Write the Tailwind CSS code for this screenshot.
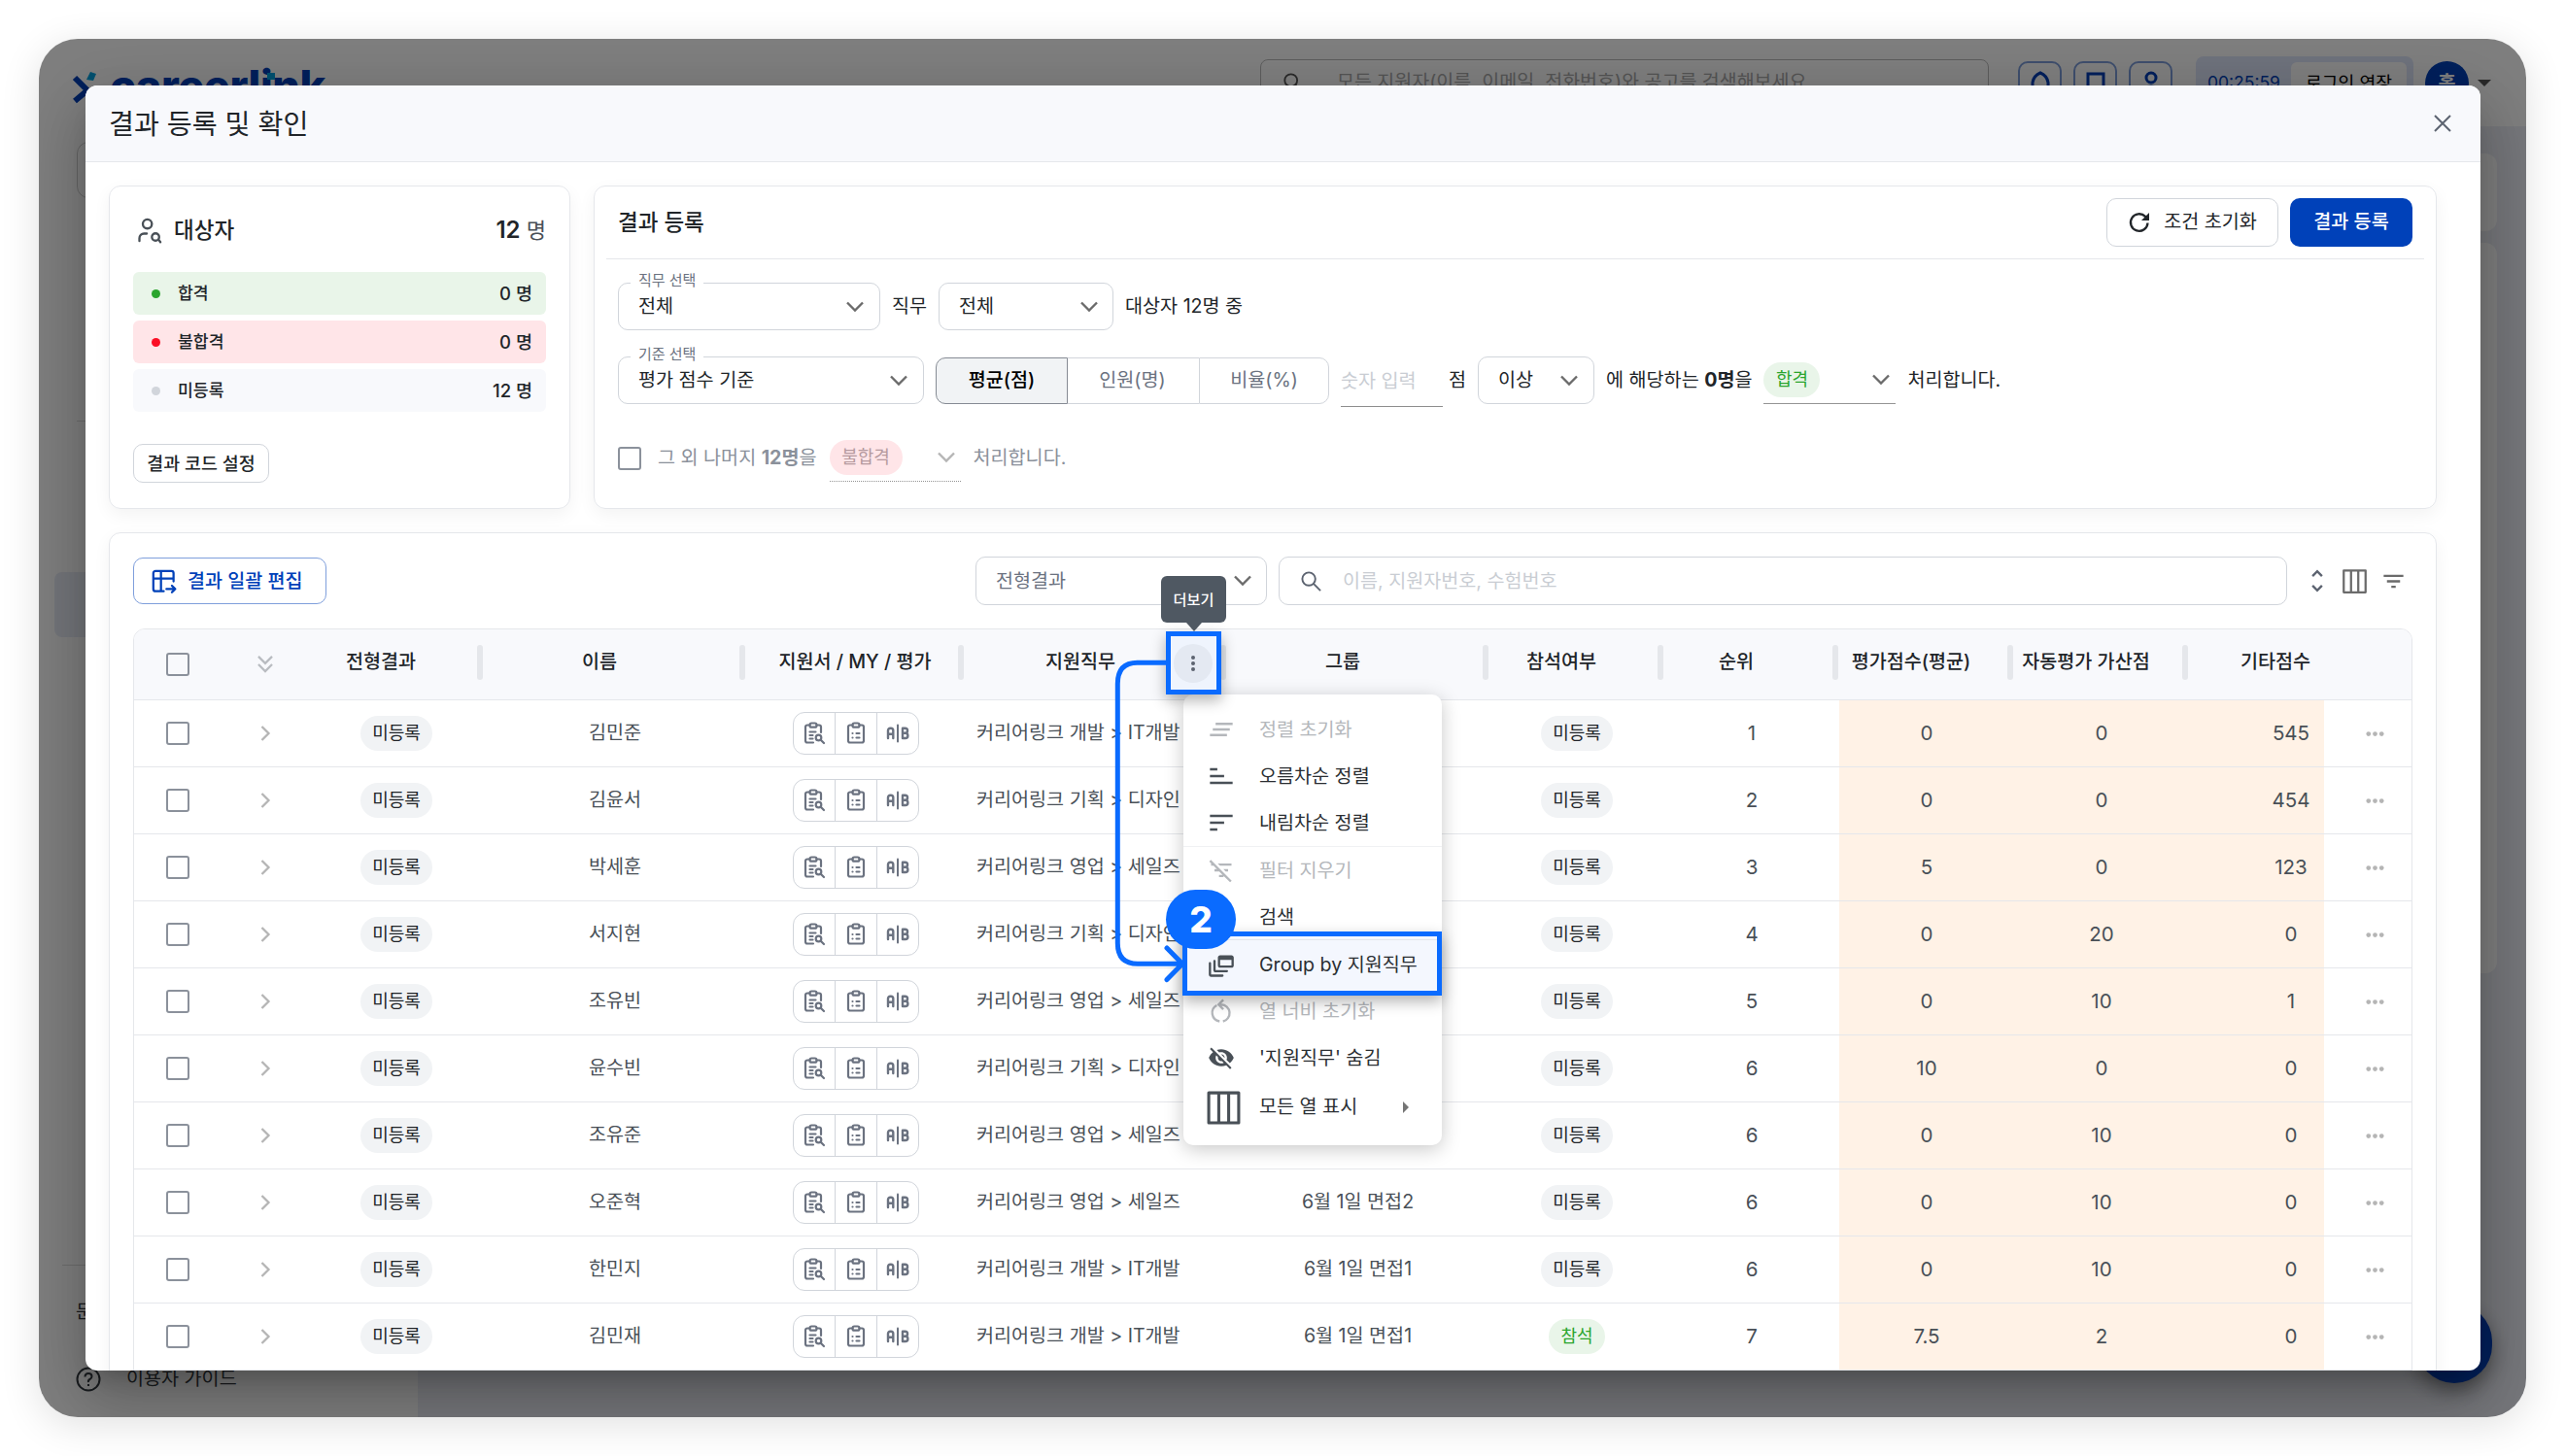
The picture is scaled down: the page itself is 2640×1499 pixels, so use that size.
<!DOCTYPE html>
<html lang="ko">
<head>
    <meta charset="UTF-8">
    <meta name="viewport" content="width=device-width, initial-scale=1.0">
    <script src="https://cdn.jsdelivr.net/npm/@tailwindcss/browser@4"></script>
    <title>결과 등록 및 확인</title>
</head>
<body class="w-[2640px] h-[1499px] overflow-hidden bg-white font-[Inter,'Noto_Sans_CJK_KR',sans-serif] text-[19.6px] leading-none text-[#212529] whitespace-nowrap">

    <!-- icon set -->
    <svg class="hidden">
        <symbol id="chevron-down" viewBox="0 0 20 20"><path d="M2 5.5l8 8 8-8" fill="none" stroke="currentColor" stroke-width="2.4"/></symbol>
        <symbol id="chevron-right" viewBox="0 0 24 24"><path d="M8.5 5l7 7-7 7" fill="none" stroke="currentColor" stroke-width="2.3"/></symbol>
        <symbol id="chevrons-down" viewBox="0 0 24 24"><path d="M5.5 4.5l6.5 6.5 6.5-6.5M5.5 12l6.5 6.5 6.5-6.5" fill="none" stroke="currentColor" stroke-width="2.1"/></symbol>
        <symbol id="search" viewBox="0 0 24 24"><circle cx="9.5" cy="9.5" r="7" fill="none" stroke="currentColor" stroke-width="2"/><path d="M14.5 14.5l7.5 7.5" stroke="currentColor" stroke-width="2"/></symbol>
        <symbol id="user-search" viewBox="0 0 24 24" fill="none" stroke="currentColor" stroke-width="2" stroke-linecap="round" stroke-linejoin="round"><path d="M6 6.500a4 4 0 1 0 8 0a4 4 0 0 0-8 0M3 21.500v-2.500a4 4 0 0 1 4-4h2.500M14 18a3.200 3.200 0 1 0 6.400 0a3.200 3.200 0 1 0-6.400 0M20 20.500L21.500 22.500"/></symbol>
        <symbol id="clipboard-search" viewBox="0 0 24 24" fill="none" stroke="currentColor" stroke-width="2.200" stroke-linecap="round" stroke-linejoin="round"><path d="M11 21.500H5a2 2 0 0 1-2-2V5.500a2 2 0 0 1 2-2h2.500M14.500 3.500H17a2 2 0 0 1 2 2v5.500"/><rect x="7.500" y="1.500" width="7" height="4.200" rx="1.800"/><path d="M7.500 10.500h6M7.500 14h3M7.500 17.500h3"/><circle cx="16.500" cy="16.500" r="2.800"/><path d="M18.700 18.700L22 22"/></symbol>
        <symbol id="clipboard-list" viewBox="0 0 24 24" fill="none" stroke="currentColor" stroke-width="2.200" stroke-linecap="round" stroke-linejoin="round"><path d="M8.500 3.500H6a2 2 0 0 0-2 2v14a2 2 0 0 0 2 2h12a2 2 0 0 0 2-2v-14a2 2 0 0 0-2-2h-2.500"/><rect x="8.500" y="1.500" width="7" height="4.200" rx="1.800"/><path d="M8.500 12h.01M8.500 16.500h.01M12.500 12h3M12.500 16.500h3"/></symbol>
        <symbol id="a-b" viewBox="0 0 24 24" fill="none" stroke="currentColor" stroke-width="2.400" stroke-linecap="round" stroke-linejoin="round"><path d="M2 17v-8a2.300 2.300 0 0 1 2.300-2.300h.7a2.300 2.300 0 0 1 2.300 2.300v8M2 12.800h5.300M17 6.700v10.300h2.800a2.600 2.600 0 0 0 0-5.200h-2.800h2.500a2.500 2.500 0 0 0 0-5.100h-2.500"/><path d="M12 3.500v17" stroke-width="2"/></symbol>
        <symbol id="table-export" viewBox="0 0 24 24" fill="none" stroke="currentColor" stroke-width="2" stroke-linecap="round" stroke-linejoin="round"><path d="M12 21H4.500a2 2 0 0 1-2-2V4.500a2 2 0 0 1 2-2H19a2 2 0 0 1 2 2V12M2.500 9.500H21M9.500 2.500V21M14.500 19h8M19.500 16l3 3-3 3"/></symbol>
        <symbol id="refresh" viewBox="0 0 24 24"><path d="M20.500 12.500a8.800 8.800 0 1 1-2.500-6.600l3 3" fill="none" stroke="currentColor" stroke-width="2.300"/><path d="M22 2v8h-8z" fill="currentColor"/></symbol>
        <symbol id="columns" viewBox="0 0 24 24"><path d="M2 2h20v20H2zM8.700 2v20M15.300 2v20" fill="none" stroke="currentColor" stroke-width="2" stroke-linejoin="round"/></symbol>
        <symbol id="filter" viewBox="0 0 24 24"><path d="M3 7h18M6 12h12M10 17h4" fill="none" stroke="currentColor" stroke-width="2.200"/></symbol>
        <symbol id="unfold" viewBox="0 0 24 24"><path d="M7.500 7.500L12 3l4.500 4.500M7.500 16.500L12 21l4.500-4.500" fill="none" stroke="currentColor" stroke-width="2.200"/></symbol>
        <symbol id="more-h" viewBox="0 0 24 24" fill="currentColor"><circle cx="3.500" cy="12" r="3"/><circle cx="12" cy="12" r="3"/><circle cx="20.500" cy="12" r="3"/></symbol>
        <symbol id="clear-sort" viewBox="0 0 24 24"><path d="M7 7h15M4.500 12h15M2 17h15" stroke="currentColor" stroke-width="2.100"/></symbol>
        <symbol id="sort-asc" viewBox="0 0 24 24"><path d="M2 6h6.500M2 12h12.500M2 18h20" stroke="currentColor" stroke-width="2.100"/></symbol>
        <symbol id="sort-desc" viewBox="0 0 24 24"><path d="M2 6h20M2 12h12.500M2 18h6.500" stroke="currentColor" stroke-width="2.100"/></symbol>
        <symbol id="filter-off" viewBox="0 0 24 24" fill="currentColor"><path d="M10.830 8H21V6H8.830l2 2zm5 5H18v-2h-4.170l2 2zM14 16.830V18h-4v-2h3.170l-3-3H6v-2h2.170l-3-3H3V6h.17L1.390 4.220 2.800 2.810l18.380 18.380-1.410 1.410L14 16.830z"/></symbol>
        <symbol id="group" viewBox="0 0 24 24" fill="currentColor"><path d="M3 22h10c.55 0 1-.45 1-1s-.45-1-1-1H3V10c0-.55-.45-1-1-1s-1 .45-1 1v10c0 1.100.9 2 2 2zM7 18h10c.55 0 1-.45 1-1s-.45-1-1-1H7V8c0-.55-.45-1-1-1s-1 .45-1 1v8c0 1.100.9 2 2 2zM21 3h-10c-1.100 0-2 .9-2 2v7c0 1.100.9 2 2 2h10c1.100 0 2-.9 2-2V5c0-1.100-.9-2-2-2zm0 9H11V7h10v5z"/></symbol>
        <symbol id="restart" viewBox="0 0 24 24" fill="none" stroke="currentColor" stroke-width="2"><path d="M8 6.800A7.600 7.600 0 0 0 10.500 21M13.500 21A7.500 7.500 0 0 0 12 6.200H10M13.800 2l-4.200 4.200 4.200 4.200"/></symbol>
        <symbol id="eye-off" viewBox="0 0 24 24" fill="currentColor"><path d="M12 7c2.760 0 5 2.240 5 5 0 .65-.13 1.260-.36 1.830l2.920 2.920c1.510-1.260 2.700-2.890 3.430-4.750-1.730-4.390-6-7.500-11-7.500-1.400 0-2.740.25-3.980.7l2.160 2.160C10.740 7.130 11.350 7 12 7zM2 4.270l2.280 2.280.46.46C3.080 8.300 1.780 10.020 1 12c1.730 4.390 6 7.500 11 7.500 1.550 0 3.030-.3 4.380-.84l.42.42L19.730 22 21 20.730 3.270 3 2 4.270zM7.530 9.800l1.550 1.550c-.05.21-.08.43-.08.65 0 1.660 1.340 3 3 3 .22 0 .44-.03.65-.08l1.550 1.550c-.67.33-1.410.53-2.200.53-2.760 0-5-2.240-5-5 0-.79.2-1.530.53-2.200zm4.310-.78l3.150 3.150.02-.16c0-1.660-1.340-3-3-3l-.17.01z"/></symbol>
    </svg>

    <div class="relative ml-10 mt-10 w-[2560px] h-[1419px] rounded-[40px] overflow-hidden bg-white">
        <!-- page behind the dialog -->
        <div class="flex flex-col h-full">
            <header class="h-[90px] flex justify-between items-start pl-[34px] pr-[36px] shrink-0">
                <div class="flex items-start pt-[26px]">
                    <svg class="w-[26px] h-[46px] mt-[-1px] mr-[13px]" viewBox="0 0 26 46"><path d="M3 15l13 13-13 11" fill="none" stroke="#0041b9" stroke-width="6"/><path d="M19 9l6 2-3 7-7-1z" fill="#00a3e0"/></svg>
                    <span class="relative text-[45px] font-extrabold text-[#0041b9] tracking-[-0.4px]">careerlink<span class="absolute left-[162px] top-[9px] w-[8px] h-[7px] bg-[#00a3e0]"></span></span>
                </div>
                <div class="flex items-start pt-[18px]">
                    <div class="mt-[3px] w-[750px] h-[48px] border border-[#bbb] rounded-lg flex items-center px-[22px] gap-[34px] text-[#aaa] text-[19.5px] mr-[30px]">
                        <svg class="w-[22px] h-[22px] text-[#555]"><use href="#search"/></svg>
                        <span>모든 지원자(이름, 이메일, 전화번호)와 공고를 검색해보세요</span>
                    </div>
                    <div class="mt-[5px] flex gap-[12px] mr-[24px] text-[#0041b9]">
                        <span class="w-[45px] h-[45px] border-2 border-[#7f9fdc] rounded-[10px] flex justify-center pt-[8px]"><svg class="w-[24px] h-[26px]" viewBox="0 0 24 26"><path d="M4 22V12Q5 5 12 2Q19 5 20 12V22z" fill="none" stroke="currentColor" stroke-width="3"/></svg></span>
                        <span class="w-[45px] h-[45px] border-2 border-[#7f9fdc] rounded-[10px] flex justify-center pt-[8px]"><svg class="w-[24px] h-[26px]" viewBox="0 0 24 26"><path d="M4 24V3H20V24" fill="none" stroke="currentColor" stroke-width="3"/></svg></span>
                        <span class="w-[45px] h-[45px] border-2 border-[#7f9fdc] rounded-[10px] flex justify-center pt-[8px]"><svg class="w-[24px] h-[26px]" viewBox="0 0 24 26"><circle cx="12" cy="7" r="5" fill="none" stroke="currentColor" stroke-width="3"/><path d="M4 24q0-8 8-8t8 8" fill="none" stroke="currentColor" stroke-width="3"/></svg></span>
                    </div>
                    <div class="w-[224px] h-[54px] rounded-lg bg-[#dfe6fb] flex items-center justify-between pl-[12px] pr-[7px] mr-[12px]">
                        <span class="text-[#0041b9] text-[17.500px]">00:25:59</span>
                        <span class="w-[119px] h-[42px] rounded-md bg-white flex items-center justify-center text-[18.200px] text-black">로그인 연장</span>
                    </div>
                    <span class="mt-[5px] w-[45px] h-[45px] rounded-full bg-[#0041b9] text-white font-bold flex items-center justify-center">홍</span>
                    <span class="mt-[24px] ml-[9px] border-x-[7px] border-x-transparent border-t-[7px] border-t-[#555]"></span>
                </div>
            </header>
            <div class="flex flex-1">
                <aside class="w-[390px] flex flex-col text-[#343a40]">
                    <div class="ml-[39px] mt-[16px] h-[58px] w-[312px] border border-[#ccc] rounded-xl"></div>
                    <div class="ml-[39px] mt-[229px] w-[312px] border-t border-[#ddd]"></div>
                    <div class="ml-[16px] mt-[155px] h-[67px] w-[358px] rounded-lg bg-[#e8ecf6]"></div>
                    <div class="ml-[24px] mt-[646px] w-[342px] border-t border-[#ddd]"></div>
                    <div class="ml-[38px] mt-[38px]">문의하기</div>
                    <div class="ml-[38px] mt-[46px] flex items-center gap-[26px]">
                        <svg class="w-[26px] h-[26px]" viewBox="0 0 26 26"><circle cx="13" cy="13" r="11.500" fill="none" stroke="currentColor" stroke-width="2"/><path d="M9.500 10.500q0-3.500 3.500-3.500t3.500 3q0 2-2 3t-1.500 3M13 18v2" fill="none" stroke="currentColor" stroke-width="2"/></svg>
                        <span class="text-[19.600px]">이용자 가이드</span>
                    </div>
                </aside>
                <main class="flex-1 bg-[#edeff7] flex flex-col gap-[12px] pt-[28px] px-[30px]">
                    <div class="h-[80px] rounded-xl bg-white"></div>
                    <div class="h-[752px] rounded-xl bg-white"></div>
                </main>
            </div>
        </div>
        <span class="absolute left-[2447px] top-[1302px] w-[78px] h-[82px] rounded-full bg-[#0041b9] shadow-[0_8px_20px_rgba(0,0,0,.4)]"></span>
        <div class="absolute inset-0 bg-black/50"></div>

        <!-- dialog -->
        <div class="absolute left-[48px] top-[48px] w-[2465px] h-[1323px] rounded-[12px] bg-white shadow-[0_16px_22px_-10px_rgba(0,0,0,.2),0_36px_57px_4px_rgba(0,0,0,.14),0_14px_69px_12px_rgba(0,0,0,.12)]">
            <div class="flex flex-col h-full overflow-hidden rounded-[12px]">
                <div class="h-[79px] shrink-0 bg-[#f8f9fc] border-b border-[#e5e7eb] flex items-center justify-between pl-[24px] pr-[30px]">
                    <h1 class="text-[28.200px] pt-[3px]">결과 등록 및 확인</h1>
                    <svg class="w-[18px] h-[18px] text-[#5c6370]" viewBox="0 0 18 18"><path d="M1 1l16 16M17 1L1 17" stroke="currentColor" stroke-width="2"/></svg>
                </div>

                <div class="flex flex-col gap-[24px] pt-[24px] pl-[24px] pr-[45px]">
                    <div class="flex gap-[24px]">
                        <!-- candidates summary -->
                        <section class="w-[475px] h-[333px] border-[1.500px] border-[#e5e7eb] rounded-[12px] shadow-[0_6px_18px_rgba(0,0,0,.05)] px-[24px] flex flex-col">
                            <div class="h-[88px] flex items-center pl-[3px] pt-[2px]">
                                <svg class="w-[28px] h-[28px] text-[#495057]"><use href="#user-search"/></svg>
                                <h2 class="ml-[11px] text-[22.500px] font-medium">대상자</h2>
                                <span class="ml-auto text-[22px] text-[#495057]"><b class="font-semibold text-[#212529] text-[24px]">12</b> 명</span>
                            </div>
                            <ul class="flex flex-col gap-[6px] text-[18.500px] font-medium">
                                <li class="h-[44px] rounded-[6px] bg-[#e9f5e9] flex items-center px-[14px]"><i class="w-[9px] h-[9px] ml-[5px] rounded-full bg-[#2ba52e] mr-[18px]"></i><span class="text-[17.200px]">합격</span><span class="ml-auto">0 명</span></li>
                                <li class="h-[44px] rounded-[6px] bg-[#ffe5e8] flex items-center px-[14px]"><i class="w-[9px] h-[9px] ml-[5px] rounded-full bg-[#fb0f25] mr-[18px]"></i><span class="text-[17.200px]">불합격</span><span class="ml-auto">0 명</span></li>
                                <li class="h-[44px] rounded-[6px] bg-[#f8f9fc] flex items-center px-[14px]"><i class="w-[9px] h-[9px] ml-[5px] rounded-full bg-[#d1d5db] mr-[18px]"></i><span class="text-[17.200px]">미등록</span><span class="ml-auto">12 명</span></li>
                            </ul>
                            <button class="mt-[33px] w-[140px] h-[40px] border-[1.500px] border-[#d1d5db] rounded-[10px] text-[18.400px] font-medium">결과 코드 설정</button>
                        </section>

                        <!-- result registration -->
                        <section class="flex-1 h-[333px] border-[1.500px] border-[#e5e7eb] rounded-[12px] shadow-[0_6px_18px_rgba(0,0,0,.05)] px-[12px]">
                            <div class="h-[75px] border-b border-[#e5e7eb] flex items-center px-[12px]">
                                <h2 class="text-[22.500px] font-medium">결과 등록</h2>
                                <button class="ml-auto w-[177px] h-[50px] border-[1.500px] border-[#d1d5db] rounded-[10px] flex items-center justify-center gap-[13px]"><svg class="w-[24px] h-[24px]"><use href="#refresh"/></svg>조건 초기화</button>
                                <button class="ml-[12px] w-[126px] h-[50px] rounded-[10px] bg-[#0041b9] text-white font-medium">결과 등록</button>
                            </div>
                            <div class="flex items-center pl-[12px] mt-[24px]">
                                <div class="relative w-[270px] h-[49px] border-[1.500px] border-[#d1d5db] rounded-[10px] flex items-center justify-between pl-[20px] pr-[15px]">
                                    <span class="absolute left-[12px] top-[-11px] px-[8px] bg-white text-[15px] text-[#6b7280] leading-[16px]">직무 선택</span>전체<svg class="w-[20px] h-[20px] text-[#6b6b6b]"><use href="#chevron-down"/></svg>
                                </div>
                                <span class="mx-[12px]">직무</span>
                                <div class="w-[180px] h-[49px] border-[1.500px] border-[#d1d5db] rounded-[10px] flex items-center justify-between pl-[20px] pr-[14px]">전체<svg class="w-[20px] h-[20px] text-[#6b6b6b]"><use href="#chevron-down"/></svg></div>
                                <span class="ml-[12px]">대상자 12명 중</span>
                            </div>
                            <div class="flex items-center pl-[12px] mt-[27px] h-[49px]">
                                <div class="relative w-[315px] h-[49px] border-[1.500px] border-[#d1d5db] rounded-[10px] flex items-center justify-between pl-[20px] pr-[15px]">
                                    <span class="absolute left-[12px] top-[-11px] px-[8px] bg-white text-[15px] text-[#6b7280] leading-[16px]">기준 선택</span>평가 점수 기준<svg class="w-[20px] h-[20px] text-[#6b6b6b]"><use href="#chevron-down"/></svg>
                                </div>
                                <div class="ml-[12px] flex h-[48px] text-[#6b7280]">
                                    <span class="w-[136px] border border-[#868b94] bg-[#f1f3f5] rounded-l-[10px] flex items-center justify-center text-black font-medium">평균(점)</span>
                                    <span class="w-[135px] border-y-[1.500px] border-[#d1d5db] flex items-center justify-center pr-[2px]">인원(명)</span>
                                    <span class="w-[134px] border-[1.500px] border-[#d1d5db] rounded-r-[10px] flex items-center justify-center">비율(%)</span>
                                </div>
                                <span class="ml-[12px] mt-[4px] w-[105px] h-[50px] border-b border-[#8e8e8e] text-[#c9cdd3] leading-[46px]">숫자 입력</span>
                                <span class="ml-[6px]">점</span>
                                <div class="ml-[12px] w-[120px] h-[49px] border-[1.500px] border-[#d1d5db] rounded-[10px] flex items-center justify-between pl-[20px] pr-[15px]">이상<svg class="w-[20px] h-[20px] text-[#6b6b6b]"><use href="#chevron-down"/></svg></div>
                                <span class="ml-[12px]">에 해당하는 <b class="font-bold">0명</b>을</span>
                                <div class="ml-[12px] w-[136px] h-[49px] border-b border-[#949494] flex items-center justify-between pr-[5px]">
                                    <span class="w-[58px] h-[36px] rounded-full bg-[#e9f5e9] text-[#2ba52e] text-[18px] flex items-center justify-center">합격</span><svg class="w-[20px] h-[20px] text-[#6b6b6b]"><use href="#chevron-down"/></svg>
                                </div>
                                <span class="ml-[12px]">처리합니다.</span>
                            </div>
                            <div class="flex items-center pl-[12px] mt-[31px] h-[49px] text-[#8b919b]">
                                <i class="w-[24px] h-[24px] border-[2.500px] border-[#8b919b] rounded-[3px]"></i>
                                <span class="ml-[17px]">그 외 나머지 <b class="font-bold">12명</b>을</span>
                                <div class="ml-[13px] w-[135px] h-[49px] border-b border-dotted border-[#949494] flex items-center justify-between pr-[5px]">
                                    <span class="w-[75px] h-[36px] rounded-full bg-[#ffe5e8] text-[#b59a9f] text-[18px] flex items-center justify-center">불합격</span><svg class="w-[20px] h-[20px] text-[#b5b5b5]"><use href="#chevron-down"/></svg>
                                </div>
                                <span class="ml-[13px]">처리합니다.</span>
                            </div>
                        </section>
                    </div>

                    <!-- result table -->
                    <section class="h-[880px] border-[1.500px] border-[#e5e7eb] rounded-[12px] shadow-[0_6px_18px_rgba(0,0,0,.05)] pl-[24px] pr-[24px] pt-[24px]">
                        <div class="flex items-center h-[50px]">
                            <button class="w-[199px] h-[48px] border-[1.500px] border-[#7f9fdc] rounded-[10px] text-[#0041b9] font-medium flex items-center pl-[17px] gap-[11px]"><svg class="w-[27px] h-[27px]"><use href="#table-export"/></svg><span class="pt-px">결과 일괄 편집</span></button>
                            <div class="ml-[668px] w-[300px] h-[50px] border-[1.500px] border-[#d1d5db] rounded-[10px] flex items-center justify-between pl-[20px] pr-[14px] text-[#6b7280]"><span class="pt-px">전형결과</span><svg class="w-[20px] h-[20px] text-[#6b6b6b]"><use href="#chevron-down"/></svg></div>
                            <div class="ml-[12px] w-[1038px] h-[50px] border-[1.500px] border-[#d1d5db] rounded-[10px] flex items-center pl-[21px] gap-[21px] text-[#c9cdd3]"><svg class="w-[23px] h-[23px] text-[#5c6370]"><use href="#search"/></svg><span class="pt-px">이름, 지원자번호, 수험번호</span></div>
                            <svg class="ml-[18px] w-[26px] h-[26px] text-[#5c6370]"><use href="#unfold"/></svg>
                            <svg class="ml-[12px] w-[27px] h-[27px] text-[#6b6b6b]"><use href="#columns"/></svg>
                            <svg class="ml-[13px] w-[27px] h-[27px] text-[#6b6b6b]"><use href="#filter"/></svg>
                        </div>
                        <div class="mt-[24px] w-[2346px] border-[1.500px] border-[#e5e7eb] rounded-t-[12px] overflow-hidden">
                            <div class="h-[73px] bg-[#f8f9fc] border-b border-[#e5e7eb] grid grid-cols-[90px_90px_180px_270px_225px_270px_270px_180px_180px_180px_180px_139px_90px] font-medium">
                                <span class="flex items-center justify-center"><i class="w-[24px] h-[24px] border-[2.500px] border-[#8b919b] rounded-[3px] mr-px"></i></span>
                                <span class="flex items-center justify-center text-[#b9bcc1]"><svg class="w-[26px] h-[26px]"><use href="#chevrons-down"/></svg></span>
                                <span class="flex items-center pb-[4px]"><span class="flex-1 text-center">전형결과</span><i class="ml-[25px] w-[6px] h-[36px] rounded-full bg-[#e5e7eb] mr-px"></i></span>
                                <span class="flex items-center pb-[4px]"><span class="flex-1 text-center">이름</span><i class="ml-[25px] w-[6px] h-[36px] rounded-full bg-[#e5e7eb] mr-px"></i></span>
                                <span class="flex items-center pb-[4px]"><span class="flex-1 text-center pl-[6px]">지원서 / MY / 평가</span><i class="w-[6px] h-[36px] rounded-full bg-[#e5e7eb] mr-px"></i></span>
                                <span class="flex items-center pb-[4px]"><span class="flex-1 text-center">지원직무</span><i class="ml-[25px] w-[6px] h-[36px] rounded-full bg-[#e5e7eb] mr-px"></i></span>
                                <span class="flex items-center pb-[4px]"><span class="flex-1 text-center">그룹</span><i class="ml-[25px] w-[6px] h-[36px] rounded-full bg-[#e5e7eb] mr-px"></i></span>
                                <span class="flex items-center pb-[4px]"><span class="flex-1 text-center">참석여부</span><i class="ml-[25px] w-[6px] h-[36px] rounded-full bg-[#e5e7eb] mr-px"></i></span>
                                <span class="flex items-center pb-[4px]"><span class="flex-1 text-center">순위</span><i class="ml-[25px] w-[6px] h-[36px] rounded-full bg-[#e5e7eb] mr-px"></i></span>
                                <span class="flex items-center pb-[4px]"><span class="flex-1 text-center">평가점수(평균)</span><i class="ml-[25px] w-[6px] h-[36px] rounded-full bg-[#e5e7eb] mr-px"></i></span>
                                <span class="flex items-center pb-[4px]"><span class="flex-1 text-center">자동평가 가산점</span><i class="ml-[25px] w-[6px] h-[36px] rounded-full bg-[#e5e7eb] mr-px"></i></span>
                                <span class="flex items-center justify-end pb-[4px] pr-[14px]">기타점수</span>
                                <span></span>
                            </div>
                            <div id="rows"></div>
                        </div>
                    </section>
                </div>
            </div>

            <!-- column menu -->
            <div class="absolute left-[1130px] top-[627px] w-[266px] h-[464px] rounded-[10px] bg-white py-[12px] shadow-[0_4px_20px_rgba(0,0,0,.22)] text-[#2b2f33]">
                <div class="h-[48px] flex items-center pl-[25px] gap-[25px] text-[#b4b7bb]"><svg class="w-[28px] h-[28px]"><use href="#clear-sort"/></svg><span class="pt-px">정렬 초기화</span></div>
                <div class="h-[48px] flex items-center pl-[25px] gap-[25px]"><svg class="w-[28px] h-[28px] text-[#495057]"><use href="#sort-asc"/></svg><span class="pt-px">오름차순 정렬</span></div>
                <div class="h-[49px] flex items-center pl-[25px] gap-[25px] border-b-[1.500px] border-[#f0f1f3]"><svg class="w-[28px] h-[28px] text-[#495057]"><use href="#sort-desc"/></svg><span class="pt-px">내림차순 정렬</span></div>
                <div class="h-[48px] flex items-center pl-[25px] gap-[25px] text-[#b4b7bb]"><svg class="w-[28px] h-[28px]"><use href="#filter-off"/></svg><span class="pt-px">필터 지우기</span></div>
                <div class="h-[48px] flex items-center pl-[25px] gap-[25px]"><svg class="w-[28px] h-[28px]"></svg><span class="pt-px">검색</span></div>
                <div class="h-[49px] flex items-center pl-[25px] gap-[25px]"></div>
                <div class="h-[48px] flex items-center pl-[25px] gap-[25px] text-[#b4b7bb]"><svg class="w-[28px] h-[28px]"><use href="#restart"/></svg><span class="pt-px">열 너비 초기화</span></div>
                <div class="h-[48px] flex items-center pl-[25px] gap-[25px]"><svg class="w-[28px] h-[28px] text-[#495057]"><use href="#eye-off"/></svg><span class="pt-px">'지원직무' 숨김</span></div>
                <div class="h-[54px] flex items-center pl-[23px] gap-[18px]"><svg class="w-[37px] h-[37px] text-[#495057]"><use href="#columns"/></svg>모든 열 표시<i class="ml-auto mr-[34px] border-y-[6px] border-y-transparent border-l-[6px] border-l-[#757575]"></i></div>
            </div>

            <!-- highlighted menu entry -->
            <div class="absolute left-[1129px] top-[871px] w-[267px] h-[66px] border-[5px] border-[#0a6bff] bg-[#f4f7fe] shadow-[0_6px_14px_rgba(0,0,0,.3)] flex flex-col">
                <div class="mt-[3px] border-t border-[#e3e6ec]"></div>
                <div class="flex-1 flex items-center pl-[21px] gap-[25px] text-[#2b2f33]"><svg class="w-[28px] h-[28px] text-[#495057]"><use href="#group"/></svg><span>Group by 지원직무</span></div>
            </div>

            <!-- highlighted column button -->
            <div class="absolute left-[1112px] top-[562px] w-[57px] h-[65px] border-[5px] border-[#0a6bff] bg-[#eff4fd] shadow-[0_6px_14px_rgba(0,0,0,.3)] flex items-center justify-center pr-px">
                <span class="w-[40px] h-[40px] rounded-full bg-[#e4e9f2] flex flex-col items-center justify-center gap-[2px]"><i class="w-[4px] h-[4px] rounded-full bg-[#5c6370]"></i><i class="w-[4px] h-[4px] rounded-full bg-[#5c6370]"></i><i class="w-[4px] h-[4px] rounded-full bg-[#5c6370]"></i></span>
            </div>

            <!-- connector -->
            <svg class="absolute left-[1052px] top-[582px] w-[90px] h-[350px]" viewBox="0 0 90 350"><path d="M62 12.300H30.500Q10.300 12.300 10.300 34V301Q10.300 322.300 31 322.300H76M61 306l16 16.300-16 16.300" fill="none" stroke="#0a6bff" stroke-width="5" stroke-linecap="round" stroke-linejoin="round"/></svg>
            <span class="absolute left-[1112px] top-[828px] w-[72px] h-[61px] rounded-full bg-[#0a6bff] text-white text-[37px] font-extrabold flex items-center justify-center">2</span>

            <!-- tooltip -->
            <div class="absolute left-[1107px] top-[505px] w-[67px] flex flex-col items-center">
                <span class="w-[67px] h-[48px] rounded-[6px] bg-[#4f5862] text-white text-[15.200px] font-medium flex items-center justify-center pt-px">더보기</span>
                <i class="border-x-[8px] border-x-transparent border-t-[9px] border-t-[#4f5862]"></i>
            </div>
        </div>
    </div>
    <!-- soft drop shadow round the frame -->
    <div class="absolute left-[40px] top-[40px] w-[2560px] h-[1419px] rounded-[40px] shadow-[0_8px_40px_rgba(0,0,0,.12)] pointer-events-none"></div>

    <script>
        const rows = [
            ['김민준', '개발 > IT개발', '', '미등록', '1', '0', '0', '545'],
            ['김윤서', '기획 > 디자인', '', '미등록', '2', '0', '0', '454'],
            ['박세훈', '영업 > 세일즈', '', '미등록', '3', '5', '0', '123'],
            ['서지현', '기획 > 디자인', '', '미등록', '4', '0', '20', '0'],
            ['조유빈', '영업 > 세일즈', '', '미등록', '5', '0', '10', '1'],
            ['윤수빈', '기획 > 디자인', '', '미등록', '6', '10', '0', '0'],
            ['조유준', '영업 > 세일즈', '', '미등록', '6', '0', '10', '0'],
            ['오준혁', '영업 > 세일즈', '6월 1일 면접2', '미등록', '6', '0', '10', '0'],
            ['한민지', '개발 > IT개발', '6월 1일 면접1', '미등록', '6', '0', '10', '0'],
            ['김민재', '개발 > IT개발', '6월 1일 면접1', '참석', '7', '7.5', '2', '0']
        ];

        document.getElementById('rows').innerHTML = rows.map(([name, job, group, attend, rank, avg, bonus, etc]) => `
            <div class="h-[69px] border-b border-[#e5e7eb] grid grid-cols-[90px_90px_180px_270px_225px_270px_270px_180px_180px_180px_180px_139px_90px] text-[#495057]">
                <span class="flex items-center justify-center"><i class="w-[24px] h-[24px] border-[2.500px] border-[#8b919b] rounded-[3px] mr-px"></i></span>
                <span class="flex items-center justify-center text-[#b5b5b5]"><svg class="w-[24px] h-[24px]"><use href="#chevron-right"/></svg></span>
                <span class="flex items-center justify-center"><span class="w-[74px] h-[36px] rounded-full bg-[#f1f3f5] text-[#212529] text-[18px] flex items-center justify-center">미등록</span></span>
                <span class="flex items-center justify-center">${name}</span>
                <span class="flex items-center justify-center">
                    <span class="flex w-[130px] h-[44px] border-[1.500px] border-[#d1d5db] rounded-[12px] text-[#6b7280] divide-x divide-[#d1d5db]">
                        <span class="flex-1 flex items-center justify-center"><svg class="w-[24px] h-[24px]"><use href="#clipboard-search"/></svg></span>
                        <span class="flex-1 flex items-center justify-center"><svg class="w-[24px] h-[24px]"><use href="#clipboard-list"/></svg></span>
                        <span class="flex-1 flex items-center justify-center"><svg class="w-[24px] h-[24px]"><use href="#a-b"/></svg></span>
                    </span>
                </span>
                <span class="flex items-center pl-[12px]">커리어링크 ${job}</span>
                <span class="flex items-center justify-center pr-px">${group}</span>
                <span class="flex items-center justify-center">${attend === '참석'
                    ? '<span class="w-[58px] h-[36px] rounded-full bg-[#e9f5e9] text-[#2ba52e] text-[18px] flex items-center justify-center">참석</span>'
                    : '<span class="w-[74px] h-[36px] rounded-full bg-[#f1f3f5] text-[#212529] text-[18px] flex items-center justify-center">미등록</span>'}</span>
                <span class="flex items-center justify-center text-[20.500px]">${rank}</span>
                <span class="flex items-center justify-center text-[20.500px] bg-[#fff2e6]">${avg}</span>
                <span class="flex items-center justify-center text-[20.500px] bg-[#fff2e6]">${bonus}</span>
                <span class="flex items-center justify-center pl-[71px] text-[20.500px] bg-[#fff2e6]">${etc}</span>
                <span class="flex items-center justify-center text-[#b5b5b5]"><svg class="ml-[14px] w-[19px] h-[19px]"><use href="#more-h"/></svg></span>
            </div>`).join('');
    </script>
</body>
</html>
